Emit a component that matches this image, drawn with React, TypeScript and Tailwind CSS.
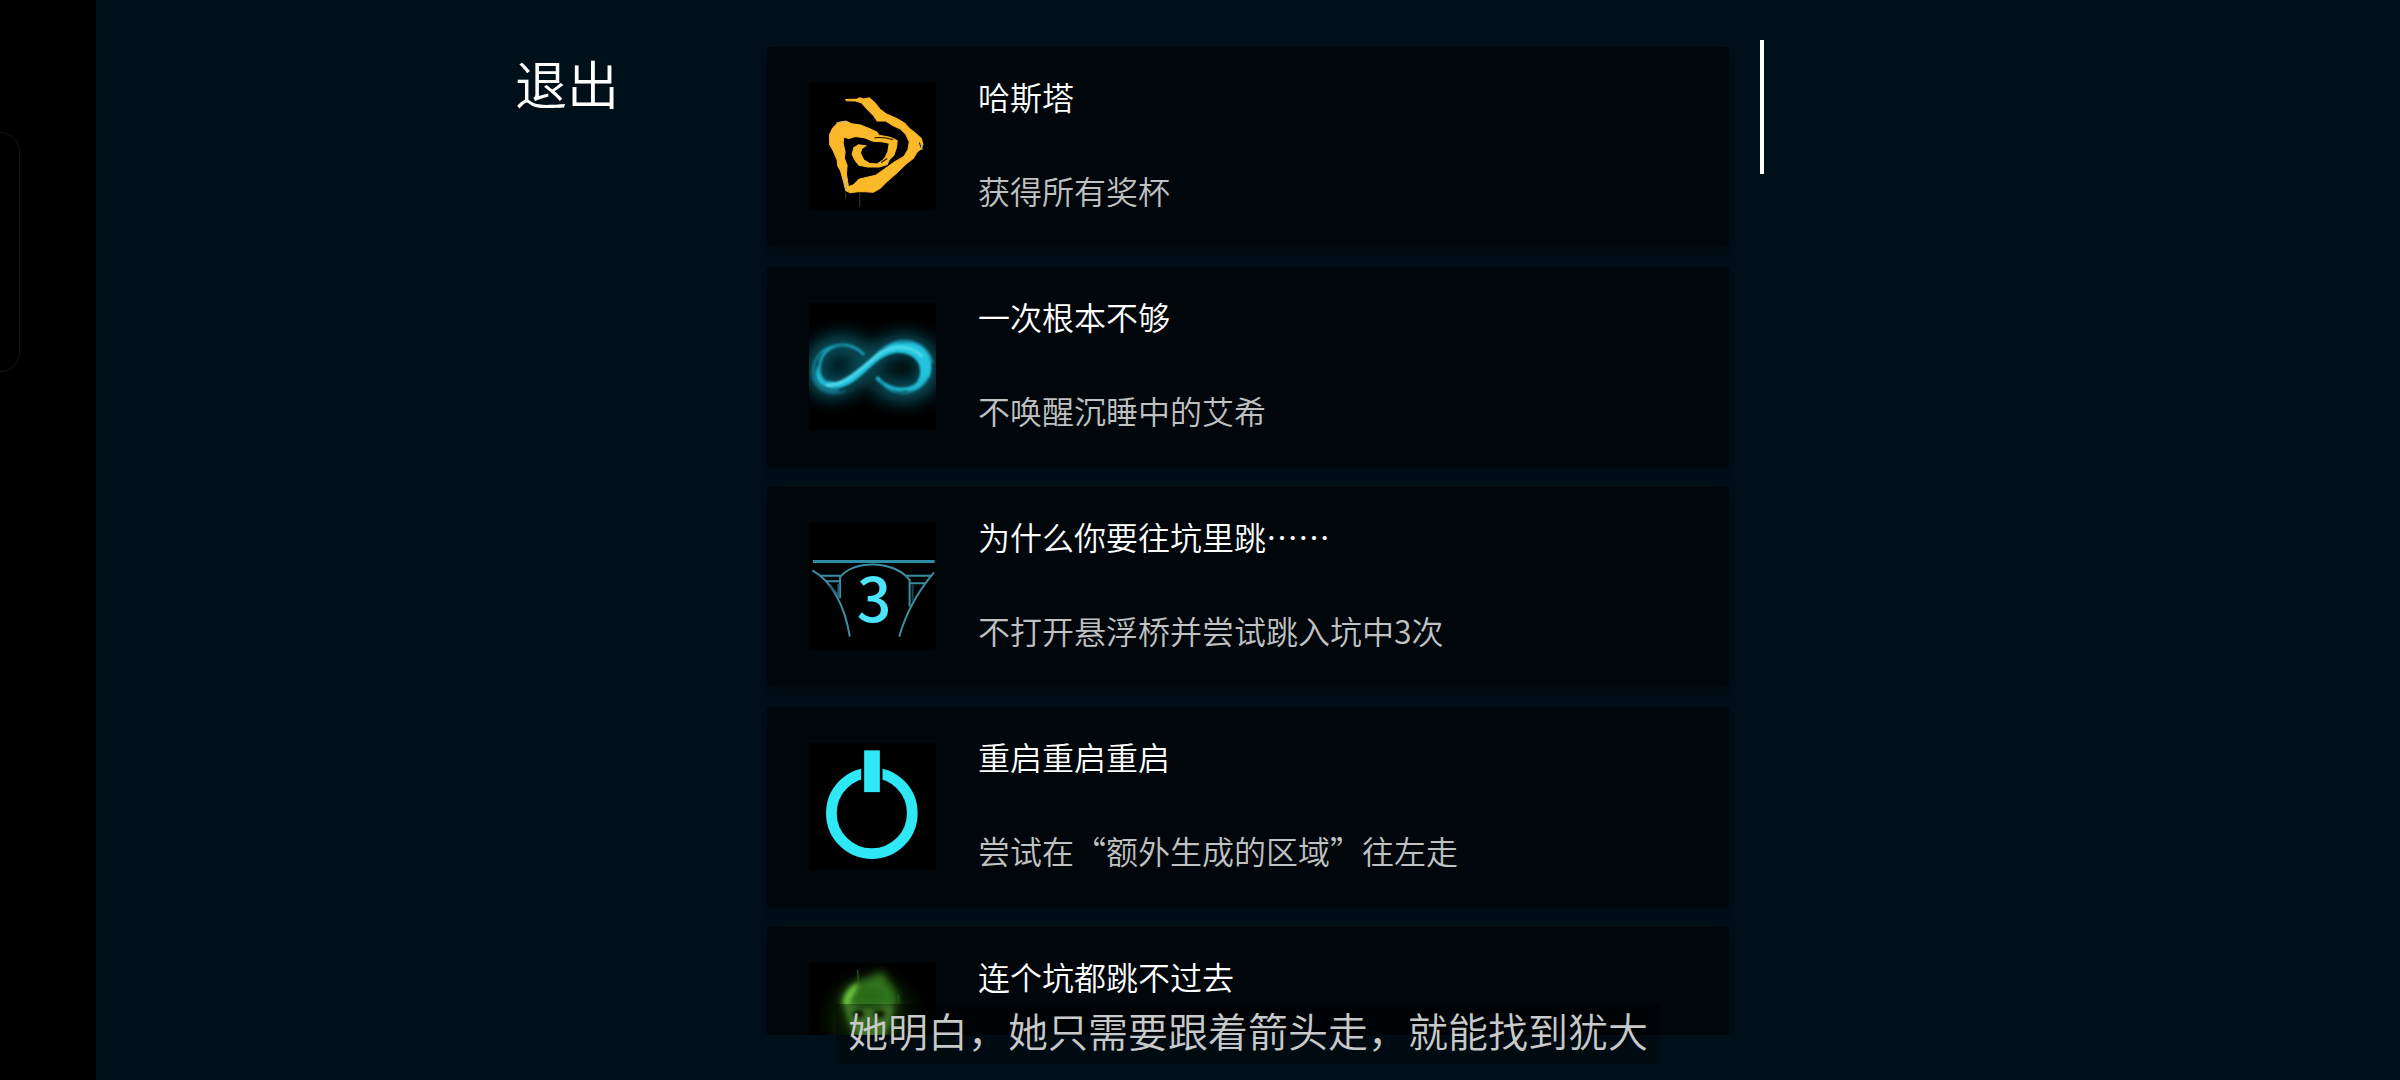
import type { ReactNode } from "react";

type Achievement = {
  id: string;
  title: string;
  description: string;
  icon: ReactNode;
};

function SpiralIcon() {
  return (
    <svg viewBox="88 70 380 380" className="h-full w-full" aria-hidden="true">
      <path
        fill="#fbb829"
        stroke="#fbb829"
        strokeWidth="3"
        d="M198 119 L232 118 L240 114 L252 118 L268 114 L284 128 L300 148 L318 162 L350 176 L374 190 L388 206 L404 218 L424 236 L429 254 L422 268 L412 276 L400 296 L376 314 L350 340 L322 364 L300 386 L280 397 L240 395 L212 398 L198 392 L190 360 L182 332 L174 318 L172 300 L160 272 L150 254 L149 226 L158 206 L172 192 L196 184 L216 192 L242 196 L268 206 L290 216 L298 226 L330 232 L352 242 L350 262 L342 286 L328 300 L322 314 L298 321 L264 321 L238 316 L226 302 L217 284 L222 264 L236 255 L258 258 L246 266 L242 280 L252 300 L268 310 L292 312 L308 302 L316 292 L324 276 L328 250 L306 246 L280 244 L254 234 L226 230 L208 236 L192 232 L190 250 L196 276 L194 296 L202 316 L200 342 L206 380 L222 374 L238 358 L262 352 L288 346 L314 328 L344 306 L372 290 L384 270 L388 246 L378 224 L362 208 L340 198 L318 184 L292 184 L280 166 L262 148 L246 130 L228 124 L200 123 Z"
      />
      <path d="M284 234 Q310 230 340 240 M304 308 L322 296 M418 248 L424 264" stroke="#1b1304" strokeWidth="3" fill="none" />
      <path d="M202 388 L196 352 M424 252 L426 270 M170 190 Q190 182 206 188" stroke="#c9b78e" strokeWidth="4" fill="none" />
      <path d="M240 400 V440 M198 398 V416" stroke="#4a360b" strokeWidth="3" />
    </svg>
  );
}

function InfinityIcon() {
  return (
    <svg viewBox="0 0 380 380" className="h-full w-full" aria-hidden="true">
      <defs>
        <filter id="halo" x="-30%" y="-60%" width="160%" height="220%">
          <feGaussianBlur stdDeviation="26" />
        </filter>
        <filter id="soft" x="-10%" y="-10%" width="120%" height="120%">
          <feGaussianBlur stdDeviation="3" />
        </filter>
      </defs>
      <path
        d="M160 150 C110 105 25 125 18 195 C15 265 90 270 140 220 C200 165 225 125 285 125 C350 125 372 180 355 220 C335 275 250 280 205 230"
        fill="none"
        stroke="#0b7f94"
        strokeWidth="64"
        opacity="0.65"
        filter="url(#halo)"
      />
      <g fill="none" filter="url(#soft)">
        <path
          d="M26 185 C22 225 50 238 84 236 C126 228 160 190 200 152 C230 122 256 118 290 118 C340 118 368 150 366 196 C364 236 336 262 290 264 C330 244 340 210 328 182 C314 154 280 146 254 150 C216 156 186 192 150 222 C120 248 88 260 60 254 C28 246 12 220 26 185 Z"
          fill="#24c3de"
        />
        <path d="M165 155 C120 105 42 120 32 185 C26 225 50 245 82 248" stroke="#1ba5bd" strokeWidth="8" />
        <path d="M158 150 C110 108 30 120 14 190 C6 240 50 272 90 260" stroke="#168da3" strokeWidth="6" />
        <path d="M10 200 C8 262 60 284 110 262" stroke="#11677a" strokeWidth="6" />
        <path d="M202 222 C240 270 310 270 342 226" stroke="#1fb6cf" strokeWidth="11" />
        <path d="M212 232 C244 286 326 282 358 222" stroke="#137d91" strokeWidth="6" />
        <path d="M215 142 C270 92 352 108 370 180" stroke="#168da3" strokeWidth="6" />
        <path d="M50 246 C100 250 150 200 190 168 C240 122 300 122 340 160" stroke="#51dff2" strokeWidth="8" />
      </g>
    </svg>
  );
}

function PitIcon() {
  return (
    <svg viewBox="0 0 380 380" className="h-full w-full" aria-hidden="true">
      <g fill="none" stroke="#3b8ea2" strokeWidth="6">
        <path d="M12 115 H376" stroke="#2d8da4" strokeWidth="9" />
        <path d="M10 142 C70 175 108 250 122 340" />
        <path d="M374 148 C330 200 290 270 270 340" />
        <path d="M93 225 V162 C130 112 250 108 301 170 V250" />
        <path d="M32 158 H94 M50 174 H92 M290 158 H368 M300 180 H350" />
        <path d="M62 185 L88 218 V182" stroke="#245a74" />
        <path d="M310 184 V232" stroke="#1c4351" />
      </g>
      <text
        x="195"
        y="297"
        textAnchor="middle"
        fill="#4ce3fb"
        fontSize="182"
        fontWeight="500"
        fontFamily="'Noto Sans CJK SC', sans-serif"
      >
        3
      </text>
    </svg>
  );
}

function PowerIcon() {
  return (
    <svg viewBox="0 0 380 380" className="h-full w-full" aria-hidden="true">
      <circle cx="188" cy="210" r="121" fill="none" stroke="#2ee9f5" strokeWidth="32" />
      <rect x="156" y="60" width="64" height="100" fill="#000" />
      <rect x="165" y="22" width="47" height="125" fill="#2ee9f5" />
    </svg>
  );
}

function SkullIcon() {
  return (
    <svg viewBox="0 0 380 380" className="h-full w-full" aria-hidden="true">
      <defs>
        <radialGradient id="skull-glow">
          <stop offset="0" stopColor="#2f7516" />
          <stop offset="0.5" stopColor="#174a0b" stopOpacity="0.55" />
          <stop offset="1" stopColor="#0a2205" stopOpacity="0" />
        </radialGradient>
        <filter id="skull-soft" x="-20%" y="-20%" width="140%" height="140%">
          <feGaussianBlur stdDeviation="12" />
        </filter>
        <filter id="skull-detail" x="-20%" y="-20%" width="140%" height="140%">
          <feGaussianBlur stdDeviation="6" />
        </filter>
      </defs>
      <ellipse cx="188" cy="170" rx="170" ry="170" fill="url(#skull-glow)" />
      <g filter="url(#skull-soft)">
        <path d="M98 115 C100 80 130 60 150 54 L190 40 L218 24 L240 60 C266 84 270 112 256 140 L244 190 L215 240 H150 L122 185 L100 140 Z" fill="#33751b" />
        <path d="M144 88 Q180 60 224 88 L226 116 H142 Z" fill="#256b17" />
      </g>
      <g filter="url(#skull-detail)">
        <path d="M102 124 C104 88 128 68 148 58 C146 82 126 98 120 128 Z" fill="#6cc43c" />
        <path d="M106 128 Q124 118 142 130 Q178 146 214 130 Q236 122 252 132 L240 190 L210 230 H152 L122 180 Z" fill="#5fae38" />
        <ellipse cx="148" cy="153" rx="20" ry="15" fill="#0a2506" />
        <ellipse cx="210" cy="153" rx="20" ry="15" fill="#0a2506" />
        <path d="M168 190 L179 166 L190 190 Z" fill="#12380a" />
      </g>
      <path d="M145 20 L148 56 M268 95 V120" stroke="#24551a" strokeWidth="4" />
    </svg>
  );
}

const achievements: Achievement[] = [
  { id: "hastur", title: "哈斯塔", description: "获得所有奖杯", icon: <SpiralIcon /> },
  { id: "once", title: "一次根本不够", description: "不唤醒沉睡中的艾希", icon: <InfinityIcon /> },
  { id: "pit", title: "为什么你要往坑里跳……", description: "不打开悬浮桥并尝试跳入坑中3次", icon: <PitIcon /> },
  { id: "reboot", title: "重启重启重启", description: "尝试在“额外生成的区域”往左走", icon: <PowerIcon /> },
  { id: "fall", title: "连个坑都跳不过去", description: "", icon: <SkullIcon /> },
];

function AchievementCard({ achievement }: { achievement: Achievement }) {
  return (
    <li className="flex h-[200px] shrink-0 items-start gap-[42px] bg-[#000609] px-[42px] py-8 shadow-[0_6px_12px_rgba(0,6,10,0.6)]">
      <div className="mt-1 size-[127px] shrink-0 overflow-hidden bg-black">{achievement.icon}</div>
      <div className="flex min-w-0 flex-col gap-[60px] text-[32px] leading-[34px]">
        <h2 className="text-white">{achievement.title}</h2>
        <p className="text-[#bfc1c2]">{achievement.description}</p>
      </div>
    </li>
  );
}

export default function App() {
  return (
    <div
      lang="zh-CN"
      className="relative flex h-screen overflow-hidden bg-[#00101b] font-['Noto_Sans_CJK_SC',sans-serif] font-[350]"
    >
      <aside className="w-24 shrink-0 bg-black pt-[132px]">
        <div className="h-[240px] w-5 rounded-r-[20px] border border-l-0 border-[#0e1712]" />
      </aside>

      <main className="relative grid min-w-0 flex-1 grid-cols-[1fr_minmax(0,962px)_1fr]">
        <div className="flex items-start justify-end pt-9 pr-[103px]">
          <button type="button" className="h-[93px] w-[194px] text-[52px] leading-none text-white">
            退出
          </button>
        </div>

        <div className="flex h-screen flex-col pt-[47px] pb-[45px]">
          <ul className="flex min-h-0 flex-1 flex-col gap-5 [clip-path:inset(-20px_-20px_0_-20px)]">
            {achievements.map((achievement) => (
              <AchievementCard key={achievement.id} achievement={achievement} />
            ))}
          </ul>
        </div>

        {/* Scroll position */}
        <div className="pt-10 pl-[31px]">
          <div className="h-[134px] w-1 bg-white" />
        </div>

        {/* Subtitle */}
        <div className="pointer-events-none absolute inset-x-0 bottom-4 flex justify-center">
          <p className="bg-black/35 px-3 pt-1 pb-3 text-[40px] leading-11 text-[#c8c9ca]">
            她明白，她只需要跟着箭头走，就能找到犹大
          </p>
        </div>
      </main>
    </div>
  );
}
